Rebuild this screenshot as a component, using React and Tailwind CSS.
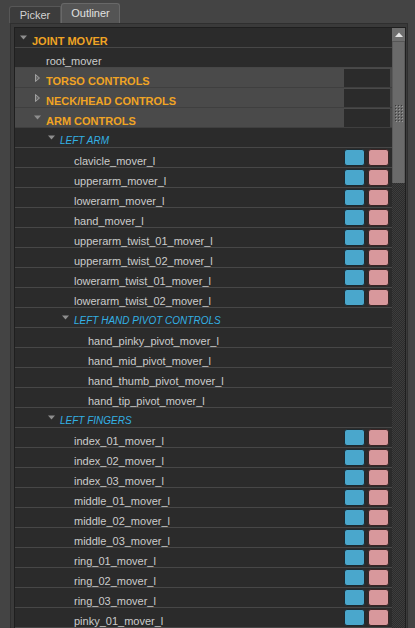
const rows = [
  { kind: 'header', label: 'JOINT MOVER', level: 0, open: true },
  { kind: 'leaf', label: 'root_mover', level: 1 },
  { kind: 'cat', label: 'TORSO CONTROLS', level: 1, open: false },
  { kind: 'cat', label: 'NECK/HEAD CONTROLS', level: 1, open: false },
  { kind: 'cat', label: 'ARM CONTROLS', level: 1, open: true },
  { kind: 'group', label: 'LEFT ARM', level: 2, open: true },
  { kind: 'leaf', label: 'clavicle_mover_l', level: 3, btns: true },
  { kind: 'leaf', label: 'upperarm_mover_l', level: 3, btns: true },
  { kind: 'leaf', label: 'lowerarm_mover_l', level: 3, btns: true },
  { kind: 'leaf', label: 'hand_mover_l', level: 3, btns: true },
  { kind: 'leaf', label: 'upperarm_twist_01_mover_l', level: 3, btns: true },
  { kind: 'leaf', label: 'upperarm_twist_02_mover_l', level: 3, btns: true },
  { kind: 'leaf', label: 'lowerarm_twist_01_mover_l', level: 3, btns: true },
  { kind: 'leaf', label: 'lowerarm_twist_02_mover_l', level: 3, btns: true },
  { kind: 'group', label: 'LEFT HAND PIVOT CONTROLS', level: 3, open: true },
  { kind: 'leaf', label: 'hand_pinky_pivot_mover_l', level: 4 },
  { kind: 'leaf', label: 'hand_mid_pivot_mover_l', level: 4 },
  { kind: 'leaf', label: 'hand_thumb_pivot_mover_l', level: 4 },
  { kind: 'leaf', label: 'hand_tip_pivot_mover_l', level: 4 },
  { kind: 'group', label: 'LEFT FINGERS', level: 2, open: true },
  { kind: 'leaf', label: 'index_01_mover_l', level: 3, btns: true },
  { kind: 'leaf', label: 'index_02_mover_l', level: 3, btns: true },
  { kind: 'leaf', label: 'index_03_mover_l', level: 3, btns: true },
  { kind: 'leaf', label: 'middle_01_mover_l', level: 3, btns: true },
  { kind: 'leaf', label: 'middle_02_mover_l', level: 3, btns: true },
  { kind: 'leaf', label: 'middle_03_mover_l', level: 3, btns: true },
  { kind: 'leaf', label: 'ring_01_mover_l', level: 3, btns: true },
  { kind: 'leaf', label: 'ring_02_mover_l', level: 3, btns: true },
  { kind: 'leaf', label: 'ring_03_mover_l', level: 3, btns: true },
  { kind: 'leaf', label: 'pinky_01_mover_l', level: 3, btns: true },
]

const indent = ['pl-0', 'pl-[14px]', 'pl-[28px]', 'pl-[42px]', 'pl-[56px]']

function Arrow({ open }) {
  if (open) {
    return (
      <svg width="7" height="5" viewBox="0 0 7 5">
        <path d="M0 0.5 H7 L3.5 4.5 Z" fill="#8e8e8e" />
      </svg>
    )
  }
  return (
    <svg width="5" height="8" viewBox="0 0 5 8">
      <path d="M0.5 0.5 L4.5 4 L0.5 7.5 Z" fill="#6a6a6a" stroke="#b4b4b4" strokeWidth="0.8" />
    </svg>
  )
}

function Row({ row }) {
  const isCat = row.kind === 'cat'
  let text = 'text-[11px] text-[#cbcbcb]'
  if (row.kind === 'header' || isCat) text = 'text-[11px] font-bold text-[#f0a424]'
  if (row.kind === 'group') text = 'text-[10px] italic text-[#33b1e4]'

  return (
    <div
      className={`h-[20px] flex items-center border-b ${indent[row.level]} ${
        isCat ? 'bg-[#4a4a4a] border-[#3f3f3f]' : 'bg-[#2b2b2b] border-[#474747]'
      }`}
    >
      <div className="w-[17px] h-full flex items-center justify-center">
        {row.kind !== 'leaf' && <Arrow open={row.open} />}
      </div>
      <span className={`mt-[6px] leading-[14px] whitespace-nowrap ${text}`}>{row.label}</span>
      {isCat && <div className="ml-auto mr-[2px] w-[46px] h-[18px] bg-[#2b2b2b]" />}
      {row.btns && (
        <div className="ml-auto flex gap-[3px] pr-[3px]">
          <div className="w-[21px] h-[17px] rounded-[3px] bg-[#4aa7cc] border border-[#1d2a30]" />
          <div className="w-[21px] h-[17px] rounded-[3px] bg-[#d8989c] border border-[#3a2424]" />
        </div>
      )}
    </div>
  )
}

function Scrollbar() {
  return (
    <div className="w-[13px] flex flex-col bg-[repeating-conic-gradient(#2c2c2c_0_25%,#3d3d3d_0_50%)] bg-[length:2px_2px]">
      <div className="h-[14px] bg-[#6e6e6e] border-b border-[#555] flex items-center justify-center">
        <svg width="8" height="5" viewBox="0 0 8 5">
          <path d="M0 5 L4 0.5 L8 5 Z" fill="#e6e6e6" />
        </svg>
      </div>
      <div className="h-[141px] bg-[#6a6a6a] border-x border-[#5a5a5a] flex flex-col items-center">
        <svg className="mt-[62px]" width="10" height="19" viewBox="0 0 10 19">
          {[0, 1, 2, 3, 4, 5].map(r =>
            [0, 1, 2].map(c => (
              <g key={`${r}-${c}`}>
                <rect x={1 + c * 3} y={1 + r * 3} width="1" height="1" fill="#3a3a3a" />
                <rect x={2 + c * 3} y={2 + r * 3} width="1" height="1" fill="#9a9a9a" />
              </g>
            ))
          )}
        </svg>
      </div>
    </div>
  )
}

export default function App() {
  return (
    <div className="w-[415px] h-[628px] bg-[#444444] overflow-hidden font-['Liberation_Sans',Arial,sans-serif]">
      <div className="h-[23px] flex items-end pl-[9px]">
        <div className="w-[52px] h-[17px] bg-[#3c3c3c] border border-b-0 border-[#575757] rounded-tl-[3px] flex items-center justify-center text-[11px] text-[#d2d2d2]">
          Picker
        </div>
        <div className="w-[59px] h-[20px] bg-[#545454] border border-b-0 border-[#686868] rounded-t-[3px] flex items-center justify-center text-[11px] text-[#e0e0e0]">
          Outliner
        </div>
      </div>
      <div className="ml-[10px] w-[398px] h-[620px] border border-[#2f2f2f] bg-[#3a3a3a] pt-[3px] pl-[3px] pr-[1px]">
        <div className="h-full flex border border-[#1f1f1f] bg-[#2b2b2b]">
          <div className="w-[377px] overflow-hidden">
            {rows.map((r, i) => (
              <Row key={i} row={r} />
            ))}
          </div>
          <Scrollbar />
        </div>
      </div>
    </div>
  )
}
